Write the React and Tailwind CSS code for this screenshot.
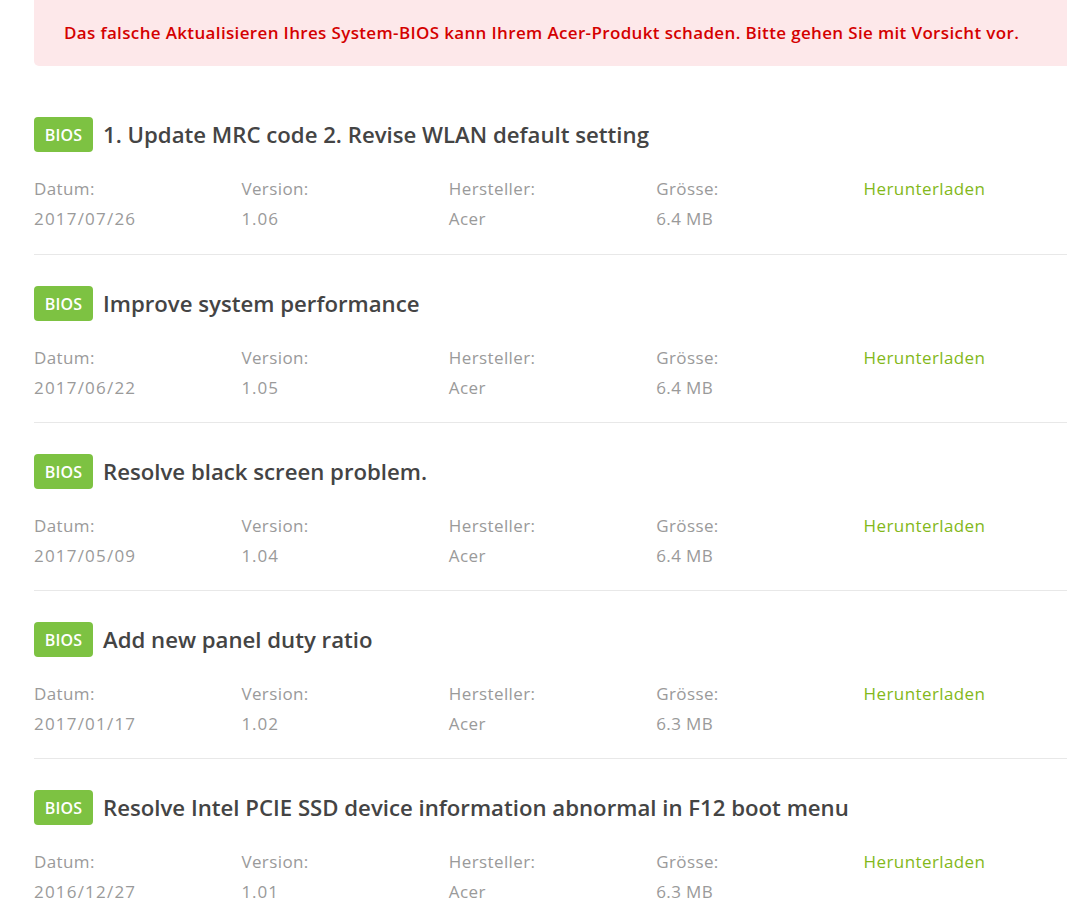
const ITEMS = [
  { title: '1. Update MRC code 2. Revise WLAN default setting', date: '2017/07/26', version: '1.06', size: '6.4 MB' },
  { title: 'Improve system performance', date: '2017/06/22', version: '1.05', size: '6.4 MB' },
  { title: 'Resolve black screen problem.', date: '2017/05/09', version: '1.04', size: '6.4 MB' },
  { title: 'Add new panel duty ratio', date: '2017/01/17', version: '1.02', size: '6.3 MB' },
  { title: 'Resolve Intel PCIE SSD device information abnormal in F12 boot menu', date: '2016/12/27', version: '1.01', size: '6.3 MB' },
]

export default function App() {
  return (
    <div className="w-[1067px] h-[907px] overflow-hidden bg-white font-['Open_Sans',sans-serif]">
      <div className="ml-[34px] w-[1037px]">
        {/* warning */}
        <div className="h-[66px] rounded-b-[5px] bg-[#fde8ea] flex items-center pl-[30px]">
          <p className="text-[17px] font-semibold text-[#d40000] tracking-[0.35px]">
            Das falsche Aktualisieren Ihres System-BIOS kann Ihrem Acer-Produkt schaden. Bitte gehen Sie mit Vorsicht vor.
          </p>
        </div>

        <div className="mt-[20px]">
          {ITEMS.map((it, i) => (
            <div key={it.version} className={`pt-[31px] ${i === 0 ? 'pb-[20px]' : 'pb-[19px]'} border-b border-[#e8e8e8]`}>
              <div className="flex items-center h-[35px]">
                <span className="h-[35px] w-[59px] rounded-[4px] bg-[#7dc242] text-white text-[16px] font-semibold tracking-[0.2px] flex items-center justify-center">BIOS</span>
                <h2 className="ml-[10px] text-[22.2px] font-semibold text-[#444]">{it.title}</h2>
              </div>
              <div className="mt-[22px] grid grid-cols-5 text-[17px] leading-[30px] text-[#9a9a9a] tracking-[0.4px]">
                <div>
                  <p>Datum:</p>
                  <p className="tracking-[1.2px]">{it.date}</p>
                </div>
                <div>
                  <p>Version:</p>
                  <p className="tracking-[1px]">{it.version}</p>
                </div>
                <div>
                  <p>Hersteller:</p>
                  <p>Acer</p>
                </div>
                <div>
                  <p>Grösse:</p>
                  <p>{it.size}</p>
                </div>
                <div>
                  <p className="text-[#83b81a] font-medium">Herunterladen</p>
                </div>
              </div>
            </div>
          ))}
        </div>
      </div>
    </div>
  )
}
